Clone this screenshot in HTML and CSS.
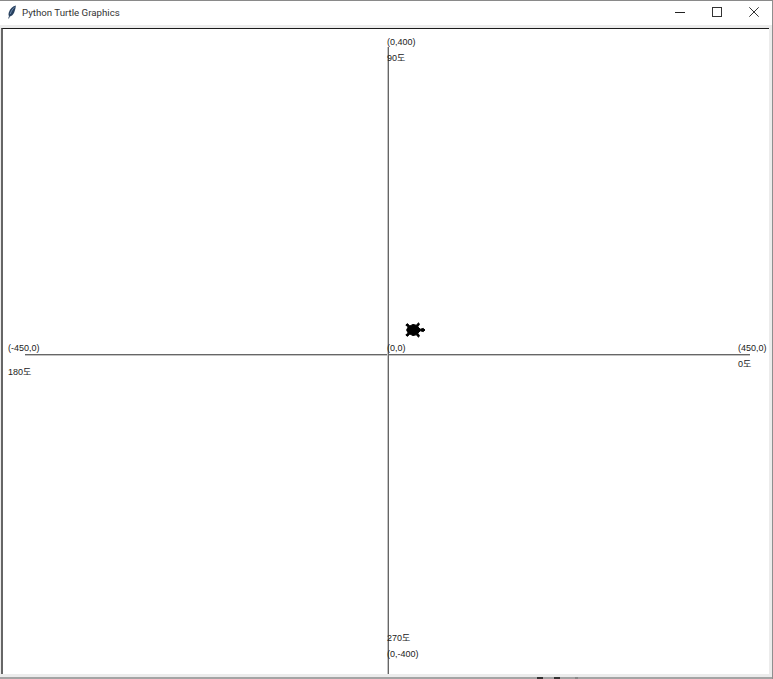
FILE: index.html
```html
<!DOCTYPE html>
<html lang="ko">
<head>
<meta charset="utf-8">
<title>Python Turtle Graphics</title>
<link rel="stylesheet" href="styles.css">
</head>
<body>
<div class="window">
  <header class="titlebar">
    <svg class="feather" viewBox="0 0 10 14" width="10" height="14" aria-hidden="true">
      <path d="M8.8 .6C6 1.2 3 3.8 1.8 7.4 1.3 9 1.5 10.2 2 11L1.2 13.4 2 13.6 2.8 11.4C4.6 11 6.2 9.6 7.2 7.4 8.2 5 8.8 2.6 8.8 .6Z" fill="#27405f"/>
      <path d="M7.6 2.2C5.8 3.6 4.2 6 3.2 9" stroke="#7f9fc4" stroke-width=".8" fill="none"/>
    </svg>
    <span class="title">Python Turtle Graphics</span>
    <div class="controls">
      <button class="ctl" aria-label="Minimize"><svg viewBox="0 0 10 10" width="10" height="10"><path d="M0 5.5H10" stroke="#222" fill="none"/></svg></button>
      <button class="ctl" aria-label="Maximize"><svg viewBox="0 0 10 10" width="10" height="10"><rect x=".5" y=".5" width="9" height="9" stroke="#333" fill="none"/></svg></button>
      <button class="ctl" aria-label="Close"><svg viewBox="0 0 10 10" width="10" height="10"><path d="M.3 .3L9.7 9.7M9.7 .3L.3 9.7" stroke="#333" fill="none"/></svg></button>
    </div>
  </header>
  <main class="canvas">
    <div class="axis axis-h"></div>
    <div class="axis axis-v"></div>
    <span class="label l-top">(0,400)</span>
    <span class="label l-90">90도</span>
    <span class="label l-center">(0,0)</span>
    <span class="label l-left">(-450,0)</span>
    <span class="label l-180">180도</span>
    <span class="label l-right">(450,0)</span>
    <span class="label l-0">0도</span>
    <span class="label l-270">270도</span>
    <span class="label l-bottom">(0,-400)</span>
    <svg class="turtle" viewBox="-9 -10 26 20" width="20.8" height="16" aria-hidden="true">
      <polygon transform="rotate(90)" points="0,-16 -2,-14 -1,-10 -4,-7 -7,-9 -9,-8 -6,-5 -7,-1 -5,3 -8,6 -6,8 -4,5 0,7 4,5 6,8 8,6 5,3 7,-1 6,-5 9,-8 7,-9 4,-7 1,-10 2,-14" fill="#000" stroke="#000" stroke-width="1.2" stroke-linejoin="round"/>
    </svg>
  </main>
  <div class="taskbar-peek">
    <i class="peek p1"></i><i class="peek p2"></i><i class="peek p3"></i>
  </div>
</div>
</body>
</html>
```
FILE: styles.css
```css
* { box-sizing: border-box; }
html, body { margin: 0; height: 100%; overflow: hidden; background: #ececec; }
.window {
  width: 773px;
  height: 679px;
  display: flex;
  flex-direction: column;
  background: #ececec;
  border-top: 1px solid #8a8a8a;
  border-right: 1px solid #8f8f8f;
}
.titlebar {
  flex: none;
  height: 24px;
  display: flex;
  align-items: center;
  background: #fff;
  padding-left: 7px;
}
.feather { flex: none; margin-top: -3px; }
.title {
  margin: -1px 0 0 5px;
  font: 9.7px/1 Roboto, "Liberation Sans", sans-serif;
  color: #333;
  white-space: nowrap;
}
.controls { margin-left: auto; display: flex; height: 100%; }
.ctl {
  width: 37px;
  height: 100%;
  border: 0;
  padding: 0 0 2px;
  background: transparent;
  display: flex;
  align-items: center;
  justify-content: center;
}
.canvas {
  position: relative;
  flex: none;
  height: 646px;
  margin: 3px 3px 0 1px;
  background: #fff;
  border-top: 1px solid #1a1a1a;
  border-left: 2px solid #666;
  overflow: hidden;
}
.axis { position: absolute; background: #666; }
.axis-h { left: 22px; top: 325px; width: 725px; height: 1px; box-shadow: 0 1px 0 #c4c4c4; }
.axis-v { left: 385px; top: 18px; width: 1px; height: 628px; box-shadow: -1px 0 0 #c4c4c4; }
.label {
  position: absolute;
  font: 9px/10px "Liberation Sans", "Noto Sans CJK KR", sans-serif;
  color: #222;
  white-space: nowrap;
}
.l-top { left: 384px; top: 8px; }
.l-90 { left: 384px; top: 24px; }
.l-center { left: 384px; top: 314px; }
.l-left { left: 5px; top: 314px; }
.l-180 { left: 5px; top: 338px; }
.l-right { left: 735px; top: 314px; }
.l-0 { left: 735px; top: 330px; }
.l-270 { left: 384px; top: 604px; }
.l-bottom { left: 384px; top: 620px; }
.turtle { position: absolute; left: 402px; top: 293px; }
.taskbar-peek {
  flex: none;
  height: 2px;
  margin-top: auto;
  background: #a4a4a4;
  position: relative;
}
.peek { position: absolute; top: 0; height: 2px; width: 6px; background: #333; }
.p1 { left: 537px; }
.p2 { left: 554px; }
.p3 { left: 575px; width: 3px; background: #888; }
```
